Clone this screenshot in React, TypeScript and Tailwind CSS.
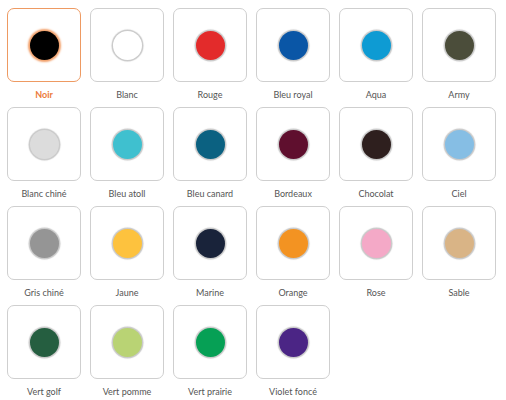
import React, { useState } from "react";

interface Swatch {
  name: string;
  hex: string;
}

const colors: Swatch[] = [
  { name: "Noir", hex: "#000000" },
  { name: "Blanc", hex: "#ffffff" },
  { name: "Rouge", hex: "#e32b2b" },
  { name: "Bleu royal", hex: "#0a56a6" },
  { name: "Aqua", hex: "#0e9bd3" },
  { name: "Army", hex: "#4b4d3a" },
  { name: "Blanc chiné", hex: "#dcdcdc" },
  { name: "Bleu atoll", hex: "#3fc0cf" },
  { name: "Bleu canard", hex: "#0b6181" },
  { name: "Bordeaux", hex: "#5f0f2e" },
  { name: "Chocolat", hex: "#2e1f1e" },
  { name: "Ciel", hex: "#86bee4" },
  { name: "Gris chiné", hex: "#959595" },
  { name: "Jaune", hex: "#fdc23e" },
  { name: "Marine", hex: "#19233a" },
  { name: "Orange", hex: "#f39322" },
  { name: "Rose", hex: "#f4a9c7" },
  { name: "Sable", hex: "#d9b486" },
  { name: "Vert golf", hex: "#255e40" },
  { name: "Vert pomme", hex: "#b9d374" },
  { name: "Vert prairie", hex: "#06a055" },
  { name: "Violet foncé", hex: "#4b2585" },
];

const App = () => {
  const [selected, setSelected] = useState<string>("Noir");

  return (
    <div className="bg-white w-[506px] h-[400px] pl-[7px] pt-[8px] font-['Lato','Liberation_Sans',sans-serif]">
      <div className="grid grid-cols-[repeat(6,74px)] gap-x-[9px] gap-y-[6px]">
        {colors.map((c) => {
          const active = c.name === selected;
          return (
            <button
              key={c.name}
              onClick={() => setSelected(c.name)}
              className="flex flex-col items-center"
            >
              <div
                className={
                  active
                    ? "w-[74px] h-[74px] rounded-[7px] border border-[#ee9a62] flex items-center justify-center"
                    : "w-[74px] h-[74px] rounded-[7px] border border-[#cfcfcf] flex items-center justify-center"
                }
              >
                <span
                  className={
                    active
                      ? "w-[29px] h-[29px] rounded-full shadow-[0_0_2px_2px_#f2a06a]"
                      : "w-[29px] h-[29px] rounded-full shadow-[0_0_1px_1.5px_rgba(0,0,0,0.22)]"
                  }
                  style={{ backgroundColor: c.hex }}
                />
              </div>
              <span
                className={
                  active
                    ? "mt-[6px] h-[13px] text-[9px] leading-[13px] font-bold text-[#ec7c3a]"
                    : "mt-[6px] h-[13px] text-[9px] leading-[13px] text-[#555]"
                }
              >
                {c.name}
              </span>
            </button>
          );
        })}
      </div>
    </div>
  );
};

export default App;
